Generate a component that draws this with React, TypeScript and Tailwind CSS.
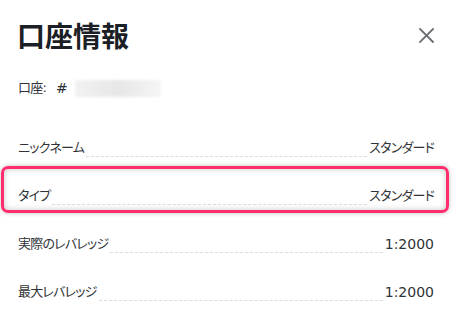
import React from "react";

const rows = [
  { label: "ニックネーム", value: "スタンダード" },
  { label: "タイプ", value: "スタンダード" },
  { label: "実際のレバレッジ", value: "1:2000" },
  { label: "最大レバレッジ", value: "1:2000" },
];

const CloseIcon: React.FC = () => (
  <svg width="15" height="15" viewBox="0 0 15 15" fill="none">
    <path d="M1 1L14 14M14 1L1 14" stroke="#6b6e70" strokeWidth="1.8" strokeLinecap="square" />
  </svg>
);

// kana gets proportional widths and a little tighter spacing
const jp = "text-[13px] tracking-[-0.8px] [font-feature-settings:'palt']";

export default function App() {
  return (
    <div className="relative h-[315px] w-[456px] overflow-hidden bg-white text-[#2f3337] [font-family:'DejaVu_Sans','Noto_Sans_CJK_JP',sans-serif]">
      <div className="flex items-center justify-between pl-[17px] pr-[22px] pt-[21px]">
        <h1 className="text-[28px] font-bold leading-[28px] text-[#1b2026] [font-family:'Noto_Sans_CJK_JP',sans-serif]">
          口座情報
        </h1>
        <CloseIcon />
      </div>

      <div className="mt-[29px] flex h-[20px] items-center pl-[18px] text-[14px]">
        <span className={jp}>口座:</span>
        <span className="ml-[10px]">#</span>
        <div className="ml-[7px] h-[17px] w-[86px] bg-gradient-to-r from-[#f1f2f1] via-[#e6e7e6] to-[#f4f5f4] blur-[1.5px]" />
      </div>

      <div className="mt-[12px] flex flex-col pl-[18px] pr-[22px] text-[14px]">
        {rows.map((row) => (
          <div key={row.label} className="flex h-[48px] items-end">
            <span className={`leading-[20px] ${jp}`}>{row.label}</span>
            <div className="mx-[2px] mb-[1px] flex-1 border-b border-dashed border-[#dcdcdc]" />
            <span className={`leading-[20px] ${row.value.startsWith("1") ? "" : jp}`}>{row.value}</span>
          </div>
        ))}
      </div>

      <div className="pointer-events-none absolute left-[1px] top-[166px] h-[47px] w-[448px] rounded-[7px] border-[3px] border-[#ff2d6b] shadow-[inset_0_0_6px_rgba(0,0,0,0.22),0_0_5px_rgba(0,0,0,0.25)]" />
    </div>
  );
}
